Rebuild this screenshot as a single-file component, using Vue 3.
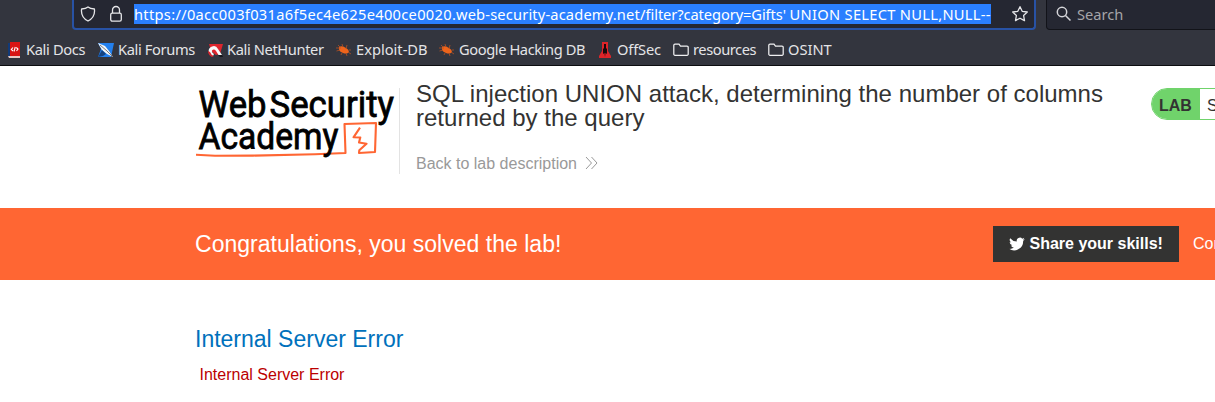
<script setup>
const bookmarks = [
  { icon: 'docs', label: 'Kali Docs', slot: 'b-docs' },
  { icon: 'forums', label: 'Kali Forums', slot: 'b-forums' },
  { icon: 'hunter', label: 'Kali NetHunter', slot: 'b-hunter' },
  { icon: 'bug', label: 'Exploit-DB', slot: 'b-exploit' },
  { icon: 'bug', label: 'Google Hacking DB', slot: 'b-google' },
  { icon: 'offsec', label: 'OffSec', slot: 'b-offsec' },
  { icon: 'folder', label: 'resources', slot: 'b-res' },
  { icon: 'folder', label: 'OSINT', slot: 'b-osint' },
]
</script>

<template>
  <div class="page">
    <header class="chrome">
      <div class="toolbar">
        <div class="urlbar">
          <svg class="shield" width="16" height="16" viewBox="0 0 16 16"><path d="M8 1C6.500 2.300 4 2.900 1.600 3C1 7.600 3 12.500 8 15C13 12.500 15 7.600 14.400 3C12 2.900 9.500 2.300 8 1Z" /></svg>
          <svg class="lock" width="14" height="18" viewBox="0 0 14 18"><rect x="1.700" y="8.200" width="10.600" height="8" rx="1.600" /><path d="M3.500 8V5A3.500 3.500 0 0 1 10.500 5V8" /></svg>
          <span class="url"><span class="host-id">https://0acc003f031a6f5ec4e625e400ce0020</span><span class="domain">.web-security-academy.net/</span><span class="query">filter?category=Gifts' </span><span class="union">UNION SELECT NULL,NULL--</span></span>
          <svg class="star" width="18" height="18" viewBox="0 0 18 18"><path d="M9 1.700L11.200 6.300L16.300 7L12.600 10.500L13.500 15.600L9 13.200L4.500 15.600L5.400 10.500L1.700 7L6.800 6.300Z" /></svg>
        </div>
        <div class="search">
          <svg width="16" height="16" viewBox="0 0 16 16"><circle cx="6" cy="6" r="4.700" /><path d="M9.500 9.500L14.500 14.500" /></svg>
          <span>Search</span>
        </div>
      </div>
      <nav class="bookmarks">
        <div v-for="b in bookmarks" :key="b.label" class="bookmark" :class="b.slot">
          <svg v-if="b.icon === 'docs'" width="16" height="16" viewBox="0 0 16 16">
            <path d="M2 1H4V15H2Z" fill="#123a78" /><path d="M4 0H14V14H4Z" fill="#d91414" /><path d="M2 14H14V16H3Z" fill="#e8c8c4" />
            <path d="M7 5.500L5.300 7.500L7 9M9.300 5L8 9.500M10.300 5.500L12 7L10.500 9" fill="none" stroke="#fff" stroke-width="1.100" />
          </svg>
          <svg v-else-if="b.icon === 'forums'" width="16" height="16" viewBox="0 0 16 16">
            <path d="M0 1H16L13 15H0L3 7Z" fill="#2380ee" />
            <path d="M0 1L7 4L11 9L15 15L9 12L4 8Z" fill="#f5f6f7" /><path d="M0 15L4 8L8 12L5 14Z" fill="#15427f" /><path d="M2 3L9 9L14 14" fill="none" stroke="#42484e" stroke-width=".7" />
          </svg>
          <svg v-else-if="b.icon === 'hunter'" width="16" height="16" viewBox="0 0 16 16">
            <path d="M2 2H16L13 12L9 13L4 9Z" fill="#df252d" />
            <path d="M3 13Q-.5 7 5 4.500Q9 3 11 7L15 13H11.500L9 9Q7 6.500 5 8.500Q4.500 10.500 7 12L6 14Z" fill="#f8f8f8" />
            <path d="M1 9Q1 13 5 15L7 14Q4 13 3 10Z" fill="#d8252e" /><path d="M11 13H15L16 15H13Z" fill="#15161b" />
          </svg>
          <svg v-else-if="b.icon === 'bug'" width="16" height="16" viewBox="0 0 16 16">
            <path d="M3 5Q6 3 10 6Q13 7.500 13 10Q11 12.500 7 11Q4 10 3 8Z" fill="#ee641b" />
            <path d="M4 5L2 3M7 5L6 2M10 7L11 3M4 8L.500 9M5 6L0 6M6 11L5 13M10 11L11 14M13 8L15 8M12 10L15 12" stroke="#b45224" stroke-width=".8" />
          </svg>
          <svg v-else-if="b.icon === 'offsec'" width="16" height="16" viewBox="0 0 16 16">
            <path d="M5 0H11V9L14 14V16H2V14L5 9Z" fill="#dd2429" /><path d="M7 2H9V6L10 7V12L8.500 11L8 15L7.500 11L6 12V7L7 6Z" fill="#19080c" />
          </svg>
          <svg v-else width="16" height="16" viewBox="0 0 16 16"><path d="M2.500 2H6L7.500 4H14A1.200 1.200 0 0 1 15.200 5.200V12A1.200 1.200 0 0 1 14 13.300H2A1.200 1.200 0 0 1 .800 12V3.200A1.200 1.200 0 0 1 2 2Z" fill="none" stroke="#efeff1" stroke-width="1.250" /></svg>
          <span>{{ b.label }}</span>
        </div>
      </nav>
    </header>

    <section class="lab-header">
      <svg class="logo" width="204" height="85" viewBox="0 0 204 85">
        <g class="wordmark">
          <text x="3.500" y="28.500" textLength="68" lengthAdjust="spacingAndGlyphs">Web</text>
          <text x="74.500" y="28.500" textLength="124.500" lengthAdjust="spacingAndGlyphs">Security</text>
        </g>
        <path class="line" d="M1 66.700L20 67.800L58 67.600L120 66.300L150.500 65L149.500 36L181 35L180 64L164 65L164.300 62.300L171.500 55.700L164 54.500L165.300 49.500L158.500 49.300L165 39.700" />
        <g class="wordmark"><text x="3.500" y="61" textLength="140" lengthAdjust="spacingAndGlyphs">Academy</text></g>
      </svg>
      <div class="heading">
        <h2>SQL injection UNION attack, determining the number of columns<br>returned by the query</h2>
        <a class="back"><span>Back to lab description</span><svg width="13" height="14" viewBox="0 0 13 14"><path d="M1 1L6.500 7L1 13M6.500 1L12 7L6.500 13" /></svg></a>
      </div>
      <div class="status"><b>LAB</b><span>Solved</span></div>
    </section>

    <section class="banner">
      <h3>Congratulations, you solved the lab!</h3>
      <div class="share">
        <svg width="16" height="16" viewBox="0 0 24 24"><path fill="#fff" d="M23.600 4.700a9.600 9.600 0 0 1-2.800.8 4.800 4.800 0 0 0 2.100-2.700 9.600 9.600 0 0 1-3 1.200 4.800 4.800 0 0 0-8.200 4.400A13.600 13.600 0 0 1 1.800 3.300a4.800 4.800 0 0 0 1.500 6.400 4.800 4.800 0 0 1-2.200-.6v.1a4.800 4.800 0 0 0 3.900 4.700 4.800 4.800 0 0 1-2.200.1 4.800 4.800 0 0 0 4.500 3.300A9.700 9.700 0 0 1 .200 19.300a13.600 13.600 0 0 0 21-12.100 9.700 9.700 0 0 0 2.400-2.500Z" /></svg>
        <span>Share your skills!</span>
      </div>
      <span class="continue">Continue learning</span>
    </section>

    <main class="content">
      <h4>Internal Server Error</h4>
      <p>Internal Server Error</p>
    </main>
  </div>
</template>

<style>
html, body { margin: 0; overflow: hidden; background: #fff; }
</style>

<style scoped>
.page { width: 1215px; height: 402px; overflow: hidden; background: #fff; font-family: "Liberation Sans", Arial, sans-serif; }
.page * { box-sizing: border-box; white-space: nowrap; }
svg { flex: none; display: block; }
.chrome { height: 66px; background: #33353e; border-bottom: 1px solid #0c0d10; font-family: "Noto Sans", sans-serif; color: #e4e4e7; overflow: hidden; }
.toolbar { height: 30px; display: flex; padding-left: 72px; gap: 10px; }
.urlbar { width: 964px; flex: none; height: 30px; background: #252732; border: 2px solid #2852a5; border-top: 0; border-radius: 0 0 4px 4px; display: flex; align-items: flex-start; padding-left: 6px; }
.shield, .lock, .star { fill: none; stroke: #e6e6e9; stroke-width: 1.3; stroke-linejoin: round; }
.shield { margin-top: 6px; }
.lock { margin: 5px 0 0 13px; }
.page .url { margin: 4px 0 0 11px; width: 857px; flex: none; height: 20px; line-height: 21px; background: #2a7fff; color: #fff; font-size: 14.67px; overflow: hidden; }
.page .url span { white-space: pre; }
.host-id { letter-spacing: .3px; }
.domain { letter-spacing: .16px; }
.query { letter-spacing: -.09px; }
.union { letter-spacing: .29px; }
.star { margin: 5px 0 0 20px; }
.search { width: 200px; flex: none; height: 30px; background: #252732; border: 1px solid #121319; border-top: 0; border-radius: 0 0 0 4px; display: flex; padding-left: 9px; color: #a5a5a9; font-size: 14.67px; line-height: 20px; }
.search svg { margin-top: 6px; fill: none; stroke: #d5d5d9; stroke-width: 1.5; }
.search span { margin: 4px 0 0 5px; }
.bookmarks { display: flex; padding: 10px 0 0 6px; font-size: 14.67px; line-height: 20px; }
.bookmark { display: flex; gap: 4px; flex: none; }
.bookmark svg { margin-top: 2px; }
.bookmark span { margin-top: -1px; }
.b-docs { width: 92px; letter-spacing: -.35px; }
.b-forums { width: 109px; letter-spacing: -.36px; }
.b-hunter { width: 129px; letter-spacing: -.38px; }
.b-exploit { width: 103px; }
.b-google { width: 158px; letter-spacing: -.41px; }
.b-offsec { width: 76px; letter-spacing: -.15px; }
.b-res { width: 95px; letter-spacing: -.44px; }
.lab-header { height: 142px; padding: 22px 0 0 195px; display: flex; align-items: flex-start; color: #333332; }
.logo { overflow: visible; }
.line { fill: none; stroke: #f63; stroke-width: 2.1; stroke-linejoin: round; }
.wordmark { font-family: Roboto, sans-serif; font-size: 37.5px; fill: #000; stroke: #000; stroke-width: .8; }
.heading { border-left: 1px solid #e3e3e3; padding-left: 16px; height: 86px; width: 752px; flex: none; }
h2 { font-size: 24px; line-height: 24px; font-weight: 400; margin: -6px 0 0; letter-spacing: .015px; }
.back { color: #999; font-size: 16px; line-height: 20px; display: flex; gap: 8px; margin-top: 24px; }
.back svg { margin-top: 2px; fill: none; stroke: #999; stroke-width: 1; }
.status { width: 120px; height: 32px; display: flex; border: 1px solid #70d36b; border-radius: 16px; font-size: 16px; line-height: 33px; overflow: hidden; flex: none; }
.status b { width: 48px; padding-left: 7px; background: #70d36b; }
.status span { padding-left: 7px; }
.banner { height: 72px; background: #ff6633; color: #fff; display: flex; align-items: center; padding-left: 195px; }
h3 { width: 798px; flex: none; margin: 0; font-size: 23px; font-weight: 400; letter-spacing: .02px; }
.share { width: 186px; height: 36px; flex: none; background: #333332; display: flex; align-items: center; padding-left: 16px; gap: 4.5px; font-size: 16px; font-weight: 700; }
.continue { margin-left: 14px; font-size: 16px; }
.content { padding: 45px 0 0 195px; }
h4 { margin: 0; color: #0071bc; font-size: 23px; line-height: 28px; font-weight: 400; }
p { margin: 12px 0 0 4.5px; color: #b00; font-size: 16px; line-height: 20px; }
</style>
